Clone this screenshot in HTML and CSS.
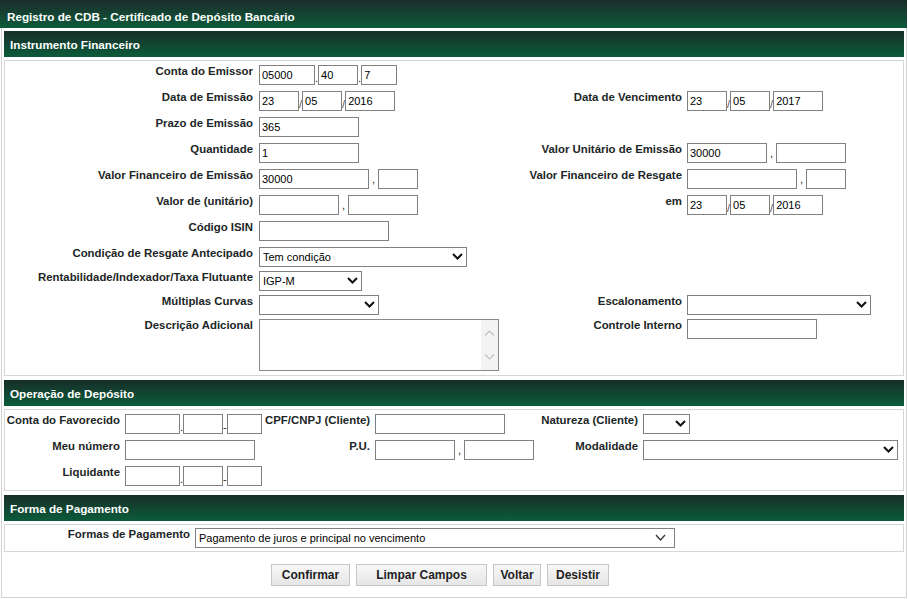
FILE: index.html
```html
<!DOCTYPE html>
<html lang="pt-BR">
<head>
<meta charset="utf-8">
<title>Registro de CDB</title>
<link rel="stylesheet" href="styles.css">
</head>
<body>
<div class="title">Registro de CDB - Certificado de Depósito Bancário</div>
<div class="wrap">
  <div class="sec-head">Instrumento Financeiro</div>
  <div class="panel p1">
    <div class="row r26">
      <div class="lbl">Conta do Emissor</div>
      <div class="fld"><input class="w56" value="05000"><span class="sep">.</span><input class="w40" value="40"><span class="sep">.</span><input class="w36" value="7"></div>
      <div class="lbl"></div><div class="fld"></div>
    </div>
    <div class="row r26">
      <div class="lbl">Data de Emissão</div>
      <div class="fld"><input class="w40" value="23"><span class="sep sl">/</span><input class="w40" value="05"><span class="sep sl">/</span><input class="w50" value="2016"></div>
      <div class="lbl">Data de Vencimento</div>
      <div class="fld"><input class="w40" value="23"><span class="sep sl">/</span><input class="w40" value="05"><span class="sep sl">/</span><input class="w50" value="2017"></div>
    </div>
    <div class="row r26">
      <div class="lbl">Prazo de Emissão</div>
      <div class="fld"><input class="w100" value="365"></div>
      <div class="lbl"></div><div class="fld"></div>
    </div>
    <div class="row r26">
      <div class="lbl">Quantidade</div>
      <div class="fld"><input class="w100" value="1"></div>
      <div class="lbl">Valor Unitário de Emissão</div>
      <div class="fld"><input class="w80" value="30000"><span class="comma">,</span><input class="w70" value=""></div>
    </div>
    <div class="row r26">
      <div class="lbl">Valor Financeiro de Emissão</div>
      <div class="fld"><input class="w110" value="30000"><span class="comma">,</span><input class="w40" value=""></div>
      <div class="lbl">Valor Financeiro de Resgate</div>
      <div class="fld"><input class="w110" value=""><span class="comma">,</span><input class="w40" value=""></div>
    </div>
    <div class="row r26">
      <div class="lbl">Valor de (unitário)</div>
      <div class="fld"><input class="w80" value=""><span class="comma">,</span><input class="w70" value=""></div>
      <div class="lbl">em</div>
      <div class="fld"><input class="w40" value="23"><span class="sep sl">/</span><input class="w40" value="05"><span class="sep sl">/</span><input class="w50" value="2016"></div>
    </div>
    <div class="row r26">
      <div class="lbl">Código ISIN</div>
      <div class="fld"><input class="w130" value=""></div>
      <div class="lbl"></div><div class="fld"></div>
    </div>
    <div class="row r24">
      <div class="lbl">Condição de Resgate Antecipado</div>
      <div class="fld"><span class="sel w208"><select><option>Tem condição</option></select><svg class="chev" width="11" height="7" viewBox="0 0 11 7"><polyline points="1,1 5.5,5.5 10,1"/></svg></span></div>
      <div class="lbl"></div><div class="fld"></div>
    </div>
    <div class="row r24">
      <div class="lbl">Rentabilidade/Indexador/Taxa Flutuante</div>
      <div class="fld"><span class="sel w103"><select><option>IGP-M</option></select><svg class="chev" width="11" height="7" viewBox="0 0 11 7"><polyline points="1,1 5.5,5.5 10,1"/></svg></span></div>
      <div class="lbl"></div><div class="fld"></div>
    </div>
    <div class="row r24">
      <div class="lbl">Múltiplas Curvas</div>
      <div class="fld"><span class="sel w120"><select><option></option></select><svg class="chev" width="11" height="7" viewBox="0 0 11 7"><polyline points="1,1 5.5,5.5 10,1"/></svg></span></div>
      <div class="lbl">Escalonamento</div>
      <div class="fld"><span class="sel w184"><select><option></option></select><svg class="chev" width="11" height="7" viewBox="0 0 11 7"><polyline points="1,1 5.5,5.5 10,1"/></svg></span></div>
    </div>
    <div class="row">
      <div class="lbl">Descrição Adicional</div>
      <div class="fld"><span class="ta"><textarea></textarea><span class="sb"><svg width="11" height="8" viewBox="0 0 11 8"><polyline points="1,6.5 5.5,2 10,6.5"/></svg><svg width="11" height="8" viewBox="0 0 11 8"><polyline points="1,1.5 5.5,6 10,1.5"/></svg></span></span></div>
      <div class="lbl">Controle Interno</div>
      <div class="fld"><input class="w130" value=""></div>
    </div>
  </div>

  <div class="sec-head">Operação de Depósito</div>
  <div class="panel p2">
    <div class="row r26">
      <div class="lbl">Conta do Favorecido</div>
      <div class="fld"><input class="w55" value=""><span class="sep">.</span><input class="w40" value=""><span class="sep">-</span><input class="w35" value=""></div>
      <div class="lbl">CPF/CNPJ (Cliente)</div>
      <div class="fld"><input class="w130" value=""></div>
      <div class="lbl">Natureza (Cliente)</div>
      <div class="fld"><span class="sel w47"><select><option></option></select><svg class="chev" width="11" height="7" viewBox="0 0 11 7"><polyline points="1,1 5.5,5.5 10,1"/></svg></span></div>
    </div>
    <div class="row r26">
      <div class="lbl">Meu número</div>
      <div class="fld"><input class="w130" value=""></div>
      <div class="lbl">P.U.</div>
      <div class="fld"><input class="w80" value=""><span class="comma">,</span><input class="w70" value=""></div>
      <div class="lbl">Modalidade</div>
      <div class="fld"><span class="sel w255"><select><option></option></select><svg class="chev" width="11" height="7" viewBox="0 0 11 7"><polyline points="1,1 5.5,5.5 10,1"/></svg></span></div>
    </div>
    <div class="row">
      <div class="lbl">Liquidante</div>
      <div class="fld"><input class="w55" value=""><span class="sep">.</span><input class="w40" value=""><span class="sep">-</span><input class="w35" value=""></div>
      <div class="lbl"></div><div class="fld"></div>
      <div class="lbl"></div><div class="fld"></div>
    </div>
  </div>

  <div class="sec-head">Forma de Pagamento</div>
  <div class="panel p3">
    <div class="row">
      <div class="lbl">Formas de Pagamento</div>
      <div class="fld"><span class="sel w480"><select><option>Pagamento de juros e principal no vencimento</option></select><svg class="chev thin" width="11" height="7" viewBox="0 0 11 7"><polyline points="1,1 5.5,6 10,1"/></svg></span></div>
    </div>
  </div>

  <div class="actions">
    <button class="btn b-conf">Confirmar</button>
    <button class="btn b-limp">Limpar Campos</button>
    <button class="btn b-volt">Voltar</button>
    <button class="btn b-des">Desistir</button>
  </div>
</div>
</body>
</html>
```

FILE: styles.css
```css
* { box-sizing: border-box; }

body {
  margin: 0;
  background: #fff;
  font-family: "Liberation Sans", Arial, sans-serif;
  color: #1c2626;
}

.title {
  width: 907px;
  height: 28px;
  padding: 5px 0 0 7px;
  line-height: 23px;
  font-size: 11.7px;
  font-weight: bold;
  color: #fff;
  background: linear-gradient(#1c2c2a, #0c5c3b);
}

.wrap {
  margin-left: 1px;
  width: 906px;
  border: 1px solid #d2d2d2;
  border-top: 0;
  padding: 3px 2px 11px;
}

.sec-head {
  height: 26px;
  padding: 1px 0 0 6px;
  line-height: 25px;
  font-size: 11.7px;
  font-weight: bold;
  color: #fff;
  background: linear-gradient(#182d29, #0b5c3a);
  margin-bottom: 3px;
}

.panel {
  border: 1px solid #d6d6d6;
  margin-bottom: 4px;
}

.p1 { padding: 4px 0 4px; }
.p2 { padding: 4px 0 4px; }
.p3 { padding: 3px 0 3px; margin-bottom: 0; }

.row {
  display: grid;
  align-items: start;
}
.r26 { height: 26px; }
.r24 { height: 24px; }

.p1 .row { grid-template-columns: 254px 261px 167px 1fr; }
.p2 .row { grid-template-columns: 120px 140px 110px 163px 105px 1fr; }
.p3 .row { grid-template-columns: 190px 1fr; }

.lbl {
  text-align: right;
  font-size: 11.4px;
  font-weight: bold;
  line-height: 13px;
  white-space: nowrap;
  padding-right: 5px;
}
.p1 .lbl:first-child { padding-right: 6px; }

.fld {
  display: flex;
  align-items: flex-start;
  white-space: nowrap;
}

input, select, textarea {
  margin: 0;
  font-family: "Liberation Sans", Arial, sans-serif;
  font-size: 11px;
  color: #000;
  background: #fff;
  border: 1px solid #808080;
  border-radius: 0;
  outline: none;
}

input {
  height: 20px;
  padding: 0 2px;
}

.sep {
  font-size: 11px;
  line-height: 11px;
  padding-top: 8px;
  color: #222;
}
.sep.sl { color: #555; }

.comma {
  font-size: 11px;
  line-height: 11px;
  padding-top: 5px;
  margin: 0 3px;
  color: #222;
}

.sel {
  position: relative;
  display: inline-block;
  height: 20px;
}
.sel select {
  -webkit-appearance: none;
  appearance: none;
  width: 100%;
  height: 20px;
  padding: 0 0 0 3px;
}
.chev {
  position: absolute;
  right: 4px;
  top: 6px;
  fill: none;
  stroke: #111;
  stroke-width: 2;
}
.chev.thin {
  right: 9px;
  stroke: #333;
  stroke-width: 1.3;
}

.ta {
  position: relative;
  display: inline-block;
  width: 240px;
  height: 52px;
}
.ta textarea {
  display: block;
  width: 240px;
  height: 52px;
  resize: none;
  border-color: #8a8a8a;
}
.sb {
  position: absolute;
  top: 1px;
  right: 1px;
  bottom: 1px;
  width: 17px;
  background: #f3f3f3;
  display: flex;
  flex-direction: column;
  align-items: center;
  justify-content: space-between;
  padding: 9px 0 9px;
}
.sb svg {
  fill: none;
  stroke: #c0c0c0;
  stroke-width: 1.2;
}

.w35 { width: 35px; }
.w36 { width: 36px; }
.w40 { width: 40px; }
.w47 { width: 47px; }
.w50 { width: 50px; }
.w55 { width: 55px; }
.w56 { width: 56px; }
.w70 { width: 70px; }
.w80 { width: 80px; }
.w100 { width: 100px; }
.w103 { width: 103px; }
.w110 { width: 110px; }
.w120 { width: 120px; }
.w130 { width: 130px; }
.w184 { width: 184px; }
.w208 { width: 208px; }
.w255 { width: 255px; }
.w480 { width: 480px; }

.actions {
  display: flex;
  gap: 6px;
  padding: 12px 0 0 267px;
}

.btn {
  height: 22px;
  padding: 0;
  font-family: "Liberation Sans", Arial, sans-serif;
  font-size: 12px;
  font-weight: bold;
  color: #1e1e1e;
  background: linear-gradient(#f7f7f7, #e6e6e6);
  border: 1px solid #c6c6c6;
  border-radius: 0;
}
.b-conf { width: 79px; }
.b-limp { width: 131px; }
.b-volt { width: 48px; }
.b-des { width: 62px; }
```
